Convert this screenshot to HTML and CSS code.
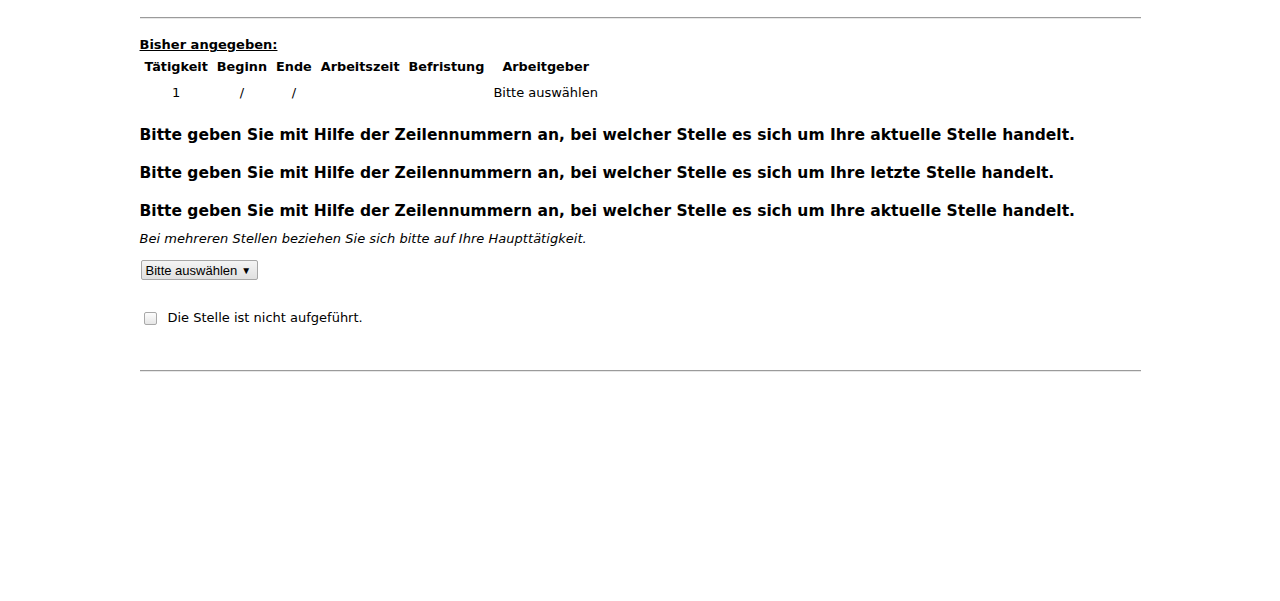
FILE: index.html
```html
<!DOCTYPE html>
<html lang="de">
<head>
<meta charset="utf-8">
<title>Stellen</title>
<link rel="stylesheet" href="styles.css">
</head>
<body>
<div class="page">
  <hr class="rule">
  <div class="summary">
    <div class="summary-title">Bisher angegeben:</div>
    <table class="jobs">
      <thead>
        <tr>
          <th>Tätigkeit</th>
          <th>Beginn</th>
          <th>Ende</th>
          <th>Arbeitszeit</th>
          <th>Befristung</th>
          <th>Arbeitgeber</th>
        </tr>
      </thead>
      <tbody>
        <tr>
          <td class="c">1</td>
          <td class="c">/</td>
          <td class="c">/</td>
          <td></td>
          <td></td>
          <td>Bitte auswählen</td>
        </tr>
      </tbody>
    </table>
  </div>
  <h3 class="question">Bitte geben Sie mit Hilfe der Zeilennummern an, bei welcher Stelle es sich um Ihre aktuelle Stelle handelt.</h3>
  <h3 class="question">Bitte geben Sie mit Hilfe der Zeilennummern an, bei welcher Stelle es sich um Ihre letzte Stelle handelt.</h3>
  <h3 class="question">Bitte geben Sie mit Hilfe der Zeilennummern an, bei welcher Stelle es sich um Ihre aktuelle Stelle handelt.</h3>
  <p class="hint">Bei mehreren Stellen beziehen Sie sich bitte auf Ihre Haupttätigkeit.</p>
  <div class="select-row">
    <span class="select">Bitte auswählen <span class="arrow">▼</span></span>
  </div>
  <label class="check-row">
    <span class="box"></span>
    <span class="check-label">Die Stelle ist nicht aufgeführt.</span>
  </label>
  <hr class="rule rule-bottom">
</div>
</body>
</html>
```
FILE: styles.css
```css
html, body {
  margin: 0;
  padding: 0;
  background: #fff;
}
body {
  font-family: "DejaVu Sans", Verdana, sans-serif;
  color: #000;
}
.page {
  width: 1001px;
  margin: 0 auto;
  padding-top: 17px;
}
.rule {
  margin: 0;
  height: 0;
  border: 0;
  border-top: 1px solid #9b9b9b;
  border-bottom: 1px solid #e8e8e8;
}
.summary {
  padding-top: 18px;
}
.summary-title {
  font-size: 13px;
  font-weight: bold;
  text-decoration: underline;
  line-height: 16px;
}
.jobs {
  border-collapse: separate;
  border-spacing: 1px 0;
  font-size: 13px;
  margin-top: 5px;
}
.jobs th {
  font-weight: bold;
  font-size: 12.8px;
  padding: 0 4px;
  height: 18px;
  line-height: 16px;
  text-align: center;
}
.jobs td {
  padding: 0 4px;
  height: 34px;
  line-height: 16px;
  text-align: left;
}
.jobs td.c {
  text-align: center;
}
.question {
  font-size: 15.5px;
  font-weight: bold;
  line-height: 20px;
  margin: 15px 0 0;
}
.question + .question {
  margin-top: 18px;
}
.hint {
  font-size: 13px;
  font-style: italic;
  line-height: 16px;
  letter-spacing: 0.03px;
  margin: 10px 0 0;
}
.select-row {
  margin-top: 13px;
  display: flex;
}
.select {
  display: inline-flex;
  align-items: center;
  box-sizing: border-box;
  height: 20px;
  margin-left: 1px;
  padding: 0 6px 0 4px;
  border: 1px solid #a6a6a6;
  border-radius: 2px;
  background: linear-gradient(#f4f4f4, #e0e0e0);
  font-family: "Liberation Sans", Arial, sans-serif;
  font-size: 13px;
  color: #000;
}
.arrow {
  font-size: 10px;
  margin-left: 4px;
}
.check-row {
  display: flex;
  align-items: center;
  margin-top: 30px;
  height: 16px;
}
.box {
  box-sizing: border-box;
  width: 13px;
  height: 13px;
  margin-left: 4px;
  border: 1px solid #a9a9a9;
  border-radius: 2px;
  background: linear-gradient(#fdfdfd, #e6e6e6);
}
.check-label {
  font-size: 13px;
  margin-left: 11px;
  line-height: 16px;
}
.rule-bottom {
  margin-top: 44px;
}
```
